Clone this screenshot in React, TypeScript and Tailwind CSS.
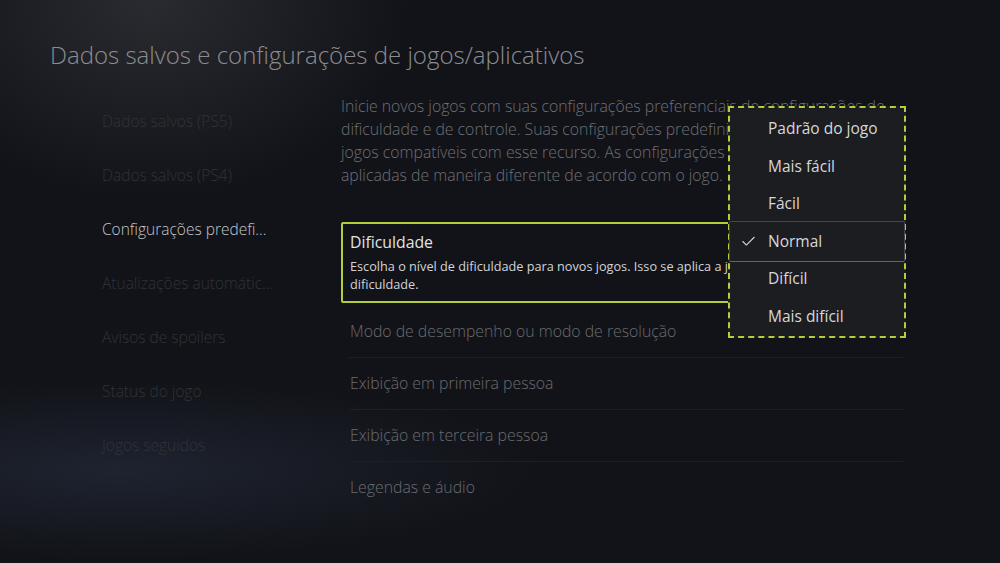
import React from 'react';
import { Check } from 'lucide-react';

const navItems = [
  'Dados salvos (PS5)',
  'Dados salvos (PS4)',
  'Configurações predefi...',
  'Atualizações automátic...',
  'Avisos de spoilers',
  'Status do jogo',
  'Jogos seguidos',
];

const rows = [
  'Modo de desempenho ou modo de resolução',
  'Exibição em primeira pessoa',
  'Exibição em terceira pessoa',
  'Legendas e áudio',
];

const options = ['Padrão do jogo', 'Mais fácil', 'Fácil', 'Normal', 'Difícil', 'Mais difícil'];

export default function App() {
  return (
    <div
      className="w-[1000px] h-[563px] overflow-hidden bg-[#121318] bg-[radial-gradient(ellipse_260px_200px_at_150px_0px,#2a2b30_0%,transparent_100%),radial-gradient(ellipse_420px_90px_at_120px_470px,#1e2330_0%,transparent_100%)] pt-[40px]"
      style={{ fontFamily: '"Open Sans", "Noto Sans", sans-serif' }}
    >
      {/* Header */}
      <h1 className="pl-[50px] h-[30px] leading-[30px] text-[24px] font-light text-[#8c8d91]">
        Dados salvos e configurações de jogos/aplicativos
      </h1>

      <div className="flex mt-[25px] pl-[102px]">
        {/* Left nav */}
        <nav className="w-[239px] flex flex-col">
          {navItems.map((item, i) => (
            <div
              key={item}
              className={`h-[54px] flex items-center text-[15.5px] font-light ${
                i === 2 ? 'text-[#c4c5c8]' : 'text-[#30323a]'
              }`}
            >
              {item}
            </div>
          ))}
        </nav>

        {/* Content */}
        <div className="relative w-[564px]">
          <p className="text-[15.8px] leading-[23px] font-light text-[#6e6f74] whitespace-nowrap">
            Inicie novos jogos com suas configurações preferenciais de configurações de
            <br />
            dificuldade e de controle. Suas configurações predefinidas serão usadas em
            <br />
            jogos compatíveis com esse recurso. As configurações podem ser
            <br />
            aplicadas de maneira diferente de acordo com o jogo.
          </p>

          <div className="mt-[35px] border-2 border-[#b2cf3b] rounded-[2px] px-[7px] pt-[8px] pb-[8px]">
            <div className="text-[15.8px] leading-[20px] text-[#e2e2e4]">Dificuldade</div>
            <div className="mt-[5px] text-[12.7px] leading-[18px] text-[#d2d3d6] whitespace-nowrap">
              Escolha o nível de dificuldade para novos jogos. Isso se aplica a jogos que oferecem ajustes de
              <br />
              dificuldade.
            </div>
          </div>

          <div className="mt-[3px] flex flex-col pl-[8px] pr-[2px]">
            {rows.map((row, i) => (
              <div
                key={row}
                className={`h-[52px] flex items-center pl-[1px] text-[15.8px] font-light text-[#6a6b70] ${
                  i < rows.length - 1 ? 'border-b border-[#1e1f24]' : ''
                }`}
              >
                {row}
              </div>
            ))}
          </div>

          {/* Dropdown */}
          <div className="absolute left-[387px] top-[11px] w-[178px] h-[232px] bg-[#1c1d21] border-2 border-dashed border-[#b2cf3b] pt-[2px]">
            {options.map((opt) => {
              const selected = opt === 'Normal';
              return (
                <div key={opt} className="relative h-[37.5px] flex items-center pl-[38px] text-[15.5px] text-[#d6d7da]">
                  {selected && (
                    <>
                      <div className="absolute left-[-1px] right-[-1px] -top-[1.5px] -bottom-[2px] border border-[#45464b] border-b-[#6b645c] rounded-[2px]" />
                      <Check className="absolute left-[10px] w-[17px] h-[17px] text-[#d6d7da]" strokeWidth={1.5} />
                    </>
                  )}
                  <span className="relative">{opt}</span>
                </div>
              );
            })}
          </div>
        </div>
      </div>
    </div>
  );
}
